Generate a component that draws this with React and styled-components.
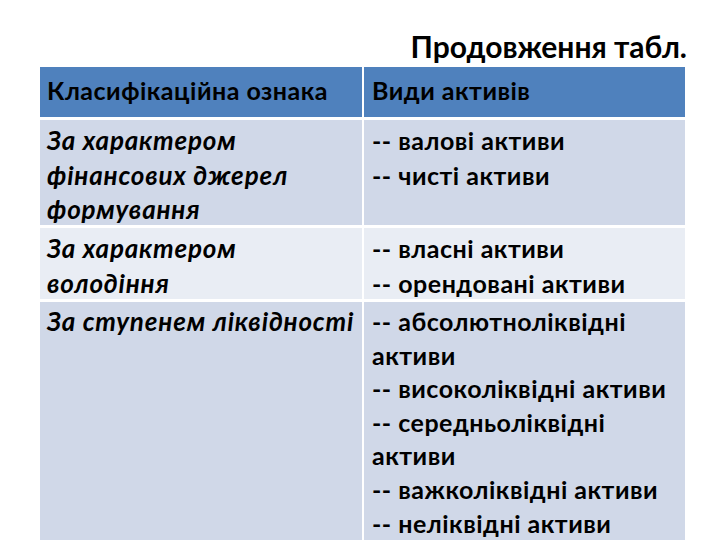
import React from "react";
import styled, { createGlobalStyle } from "styled-components";

const Global = createGlobalStyle`
  html, body { margin: 0; padding: 0; background: #ffffff; }
  body { width: 720px; height: 540px; overflow: hidden; }
`;

const Page = styled.div`
  width: 720px;
  height: 540px;
  overflow: hidden;
  font-family: "Lato", "Open Sans", sans-serif;
  color: #000;
`;

const Caption = styled.div`
  height: 67px;
  box-sizing: border-box;
  padding: 0 33px 6px 0;
  display: flex;
  justify-content: flex-end;
  align-items: flex-end;
  font-weight: 700;
  font-size: 30px;
  line-height: 1;
`;

const Table = styled.div`
  margin-left: 40px;
  width: 645px;
  display: grid;
  grid-template-columns: 322px 321px;
  column-gap: 2px;
  row-gap: 3px;
  background: #ffffff;
`;

const Cell = styled.div`
  box-sizing: border-box;
  background: ${(p) => p.$bg};
  padding: ${(p) => (p.$head ? "0 8px 5px 8px" : "3px 8px 0 8px")};
  padding-left: ${(p) => (p.$first ? "7px" : "8px")};
  padding-right: ${(p) => (p.$first ? "0" : "8px")};
  height: ${(p) => (p.$h ? `${p.$h}px` : "auto")};
  font-size: ${(p) => (p.$italic ? "26px" : "25px")};
  letter-spacing: ${(p) => (p.$italic ? "0.8px" : "0.5px")};
  font-weight: 700;
  font-style: ${(p) => (p.$italic ? "italic" : "normal")};
  line-height: ${(p) => p.$lh || 34}px;
  display: ${(p) => (p.$head ? "flex" : "block")};
  align-items: center;
`;

const Line = styled.div`
  white-space: nowrap;
`;

const Item = styled.div``;

const HEAD = "#4f81bd";
const BAND1 = "#d0d8e8";
const BAND2 = "#e9edf4";

const rows = [
  {
    label: ["За характером", "фінансових джерел", "формування"],
    items: ["-- валові активи", "-- чисті активи"],
    bg: BAND1,
    h: 105,
    lh: 34.5,
  },
  {
    label: ["За характером", "володіння"],
    items: ["-- власні активи", "-- орендовані активи"],
    bg: BAND2,
    h: 71,
    lh: 34.5,
  },
  {
    label: ["За ступенем ліквідності"],
    items: [
      "-- абсолютноліквідні активи",
      "-- високоліквідні активи",
      "-- середньоліквідні активи",
      "-- важколіквідні активи",
      "-- неліквідні активи",
    ],
    bg: BAND1,
    lh: 33.6,
  },
];

export default function App() {
  return (
    <Page>
      <Global />
      <Caption>Продовження табл.</Caption>
      <Table>
        <Cell $head $first $bg={HEAD} $h={50}>Класифікаційна ознака</Cell>
        <Cell $head $bg={HEAD} $h={50}>Види активів</Cell>
        {rows.map((r) => (
          <React.Fragment key={r.label.join(" ")}>
            <Cell $first $italic $bg={r.bg} $h={r.h} $lh={r.lh}>
              {r.label.map((l) => (
                <Line key={l}>{l}</Line>
              ))}
            </Cell>
            <Cell $bg={r.bg} $h={r.h} $lh={r.lh}>
              {r.items.map((it) => (
                <Item key={it}>{it}</Item>
              ))}
            </Cell>
          </React.Fragment>
        ))}
      </Table>
    </Page>
  );
}
